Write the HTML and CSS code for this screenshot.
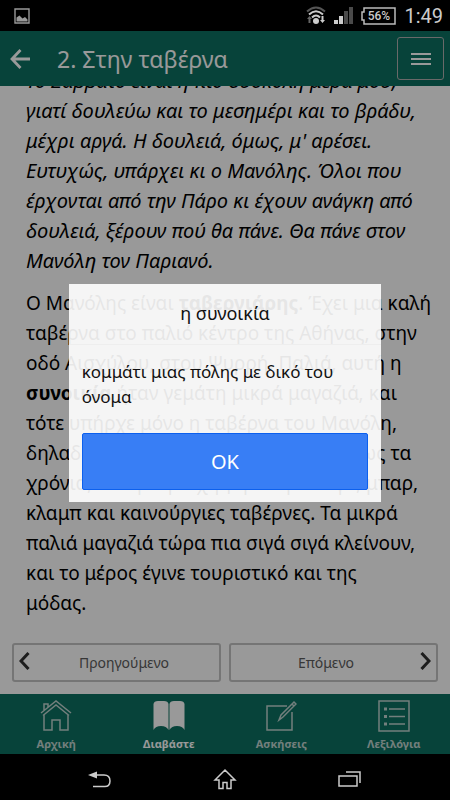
FILE: index.html
```html
<!DOCTYPE html>
<html lang="el">
<head>
<meta charset="utf-8">
<meta name="viewport" content="width=device-width, initial-scale=1">
<title>2. Στην ταβέρνα</title>
<link rel="stylesheet" href="styles.css">
</head>
<body>
<div class="phone">
  <div class="status">
    <svg class="status-photo" width="16" height="16" viewBox="0 0 16 16"><path d="M1 1h14v14H1z" fill="none" stroke="#999" stroke-width="1.4"/><path d="M2.500 13.500v-4l3-2 3 3 2.500-1.500 2.500 2.500v2z" fill="#999"/></svg>
    <svg width="20" height="19" viewBox="0 0 20 19" fill="none" stroke="#ccc" stroke-width="2"><path d="M1 5.500Q10-2.500 19 5.500" stroke="#555"/><path d="M3 8.500Q10 2 17 8.500M6 11.500Q10 7.500 14 11.500"/><circle cx="10" cy="15" r="3" fill="#ccc" stroke="none"/><path d="M1 13l2.500-3L6 13H4.500v4h-2v-4z" fill="#666" stroke="none"/><path d="M14 14l2.500 3 2.500-3h-1.500v-4h-2v4z" fill="#ccc" stroke="none"/></svg>
    <svg class="status-signal" width="19" height="17" viewBox="0 0 19 17"><path d="M0 13h4v4H0zM5 9h4v8H5z" fill="#ccc"/><path d="M10 4h4v13h-4zM15 0h4v17h-4z" fill="#4a4a4a"/></svg>
    <div class="battery"><svg width="35" height="18" viewBox="0 0 35 18" fill="none" stroke="#bbb" stroke-width="1.500"><path d="M3 1h31v16H3v-4H1V5h2z"/></svg><span>56%</span></div>
    <span class="clock">1:49</span>
  </div>
  <div class="app">
    <header class="bar">
      <button class="back" aria-label="Πίσω"><svg width="20" height="20" viewBox="0 0 20 20" fill="none" stroke="#fff" stroke-width="2.800"><path d="M20 10H2M10.500 1L2 10l8.500 9"/></svg></button>
      <h1>2. Στην ταβέρνα</h1>
      <button class="menu" aria-label="Μενού"><svg width="20" height="14" viewBox="0 0 20 14" stroke="#fff" stroke-width="2"><path d="M0 2h20M0 7h20M0 12h20"/></svg></button>
    </header>
    <main class="content">
      <article class="story">
        <p class="quote">Το Σάββατο είναι η πιο δύσκολη μέρα μου,<br>γιατί δουλεύω και το μεσημέρι και το βράδυ,<br>μέχρι αργά. Η δουλειά, όμως, μ' αρέσει.<br>Ευτυχώς, υπάρχει κι ο Μανόλης. Όλοι που<br>έρχονται από την Πάρο κι έχουν ανάγκη από<br>δουλειά, ξέρουν πού θα πάνε. Θα πάνε στον<br>Μανόλη τον Παριανό.</p>
        <p>Ο Μανόλης είναι <b>ταβερνιάρης</b>. Έχει μια καλή<br>ταβέρνα στο παλιό κέντρο της Αθήνας, στην<br>οδό Αισχύλου, στου Ψυρρή. Παλιά, αυτή η<br><b>συνοικία</b> ήταν γεμάτη μικρά μαγαζιά, και<br>τότε υπήρχε μόνο η ταβέρνα του Μανόλη,<br>δηλαδή του πατέρα του. Τώρα, όμως, ως τα<br>χρόνια, και η περιοχή γέμισε με καφέ, μπαρ,<br>κλαμπ και καινούργιες ταβέρνες. Τα μικρά<br>παλιά μαγαζιά τώρα πια σιγά σιγά κλείνουν,<br>και το μέρος έγινε τουριστικό και της<br>μόδας.</p>
      </article>
      <nav class="pager">
        <button class="prev"><svg width="11" height="18" viewBox="0 0 11 18"><path d="M9.500 1L2 9l7.500 8"/></svg>Προηγούμενο</button>
        <button class="next"><svg width="11" height="18" viewBox="0 0 11 18"><path d="M1.500 1L9 9l-7.500 8"/></svg>Επόμενο</button>
      </nav>
    </main>
    <nav class="tabs">
      <a href="#home"><svg width="32" height="32" viewBox="0 0 32 32"><path d="M1 13L16 1l15 12M3 15.500L16 5l13 10.500M4 10V4h4v3M4 15v15h8V20h8v10h8V15"/></svg>Αρχική</a>
      <a class="active" href="#read"><svg width="32" height="32" viewBox="0 0 32 32"><path d="M.5 4Q1 1 5 1h6q4 0 4.500 3v26q-2-4-7.500-4T.5 30zM16.500 4Q17 1 21 1h6q4 0 4.500 3v26q-2-4-7.500-4t-7.500 4z"/></svg>Διαβάστε</a>
      <a href="#exercises"><svg width="32" height="32" viewBox="0 0 32 32"><path d="M22 6H2v24h25V12M14 20l2-5L29 2l2 2-13 13zM27 4l2 2"/></svg>Ασκήσεις</a>
      <a href="#glossary"><svg width="32" height="32" viewBox="0 0 32 32"><path d="M1 1h30v30H1zM11 9h16M11 16.500h16M11 24h16"/><path d="M6 9h3M6 16.500h3M6 24h3" stroke-width="3"/></svg>Λεξιλόγια</a>
    </nav>
    <div class="backdrop">
      <section class="popup" role="dialog" aria-labelledby="word">
        <h2 id="word">η συνοικία</h2>
        <div class="popup-body"><p>κομμάτι μιας πόλης με δικό του<br>όνομα</p><button class="ok">OK</button></div>
      </section>
    </div>
  </div>
  <div class="keys">
    <button aria-label="Επιστροφή"><svg width="24" height="18" viewBox="0 0 24 18"><path d="M6 5h10q6 0 6 6t-6 5.500H5"/><path d="M0 5l9-3.500v7z" fill="#ccc" stroke="none"/></svg></button>
    <button aria-label="Αρχική οθόνη"><svg width="24" height="22" viewBox="0 0 24 22"><path d="M2 12L12 2l10 10h-4v8.500h-4v-6h-4v6H6V12z"/></svg></button>
    <button aria-label="Πρόσφατα"><svg width="24" height="18" viewBox="0 0 24 18"><path d="M1 6h18v10H1zM8 2h14v11"/></svg></button>
  </div>
</div>
</body>
</html>
```
FILE: styles.css
```css
* { box-sizing: border-box; }
body { margin: 0; background: #000; font-family: "Noto Sans", "Open Sans", sans-serif; }
h1, h2, p { margin: 0; font-weight: 400; }
button { font: inherit; color: inherit; margin: 0; padding: 0; border: 0; background: none; }
svg { display: block; flex: none; }

.phone { display: flex; flex-direction: column; height: 100vh; overflow: hidden; }
.status { display: flex; flex: none; align-items: center; gap: 8px; height: 31px; padding: 0 7px 0 14px; color: #ccc; font-family: Roboto, sans-serif; }
.status-photo { margin-right: auto; }
.battery { display: grid; place-items: center; }
.battery > * { grid-area: 1 / 1; }
.battery span { font-size: 12px; font-weight: 500; }
.clock { font-size: 20px; }

.app { position: relative; display: flex; flex: 1; flex-direction: column; min-height: 0; background: #fff; }
.bar { display: flex; flex: none; align-items: center; height: 55px; padding: 0 6px 0 10px; background: #0d7061; color: #fff; }
.bar h1 { flex: 1; padding-left: 27px; font-size: 23px; line-height: 32px; }
.menu { display: grid; place-items: center; width: 47px; height: 43px; border: 1px solid #b0b0b0; border-radius: 3px; }

.content { display: flex; flex: 1; flex-direction: column; justify-content: flex-end; min-height: 0; overflow: hidden; padding: 0 12px 12px; }
.story { padding: 0 14px; font-size: 19px; line-height: 30px; white-space: nowrap; }
.story p { margin-bottom: 12px; }
.story p:last-child { margin-bottom: 25px; }
.story .quote { font-size: 20px; font-style: italic; }
.pager { display: flex; gap: 8px; }
.pager button { position: relative; flex: 1; height: 39px; border: 2px solid #c4c4c4; border-radius: 3px; color: #5c5c5c; font-size: 14px; }
.pager .prev { padding-left: 15px; }
.pager .next { padding-right: 15px; }
.pager svg { position: absolute; top: 7px; fill: none; stroke: #333; stroke-width: 3; }
.prev svg { left: 5px; }
.next svg { right: 5px; }

.tabs { display: flex; flex: none; height: 60px; background: #0d7061; }
.tabs a { display: flex; flex: 1; flex-direction: column; align-items: center; gap: 2px; padding-top: 6px; color: #c0d4d0; font-size: 11px; line-height: 20px; font-weight: 700; text-decoration: none; }
.tabs svg { fill: none; stroke: currentColor; stroke-width: 1.5; }
.tabs .active { color: #fff; }
.tabs .active svg { fill: #fff; stroke: none; }

.backdrop { position: absolute; inset: 0; display: grid; place-items: center; background: rgba(0, 0, 0, .4); }
.popup { width: 69.5%; max-width: 400px; background: rgba(255, 255, 255, .9); color: #111; }
.popup h2 { height: 61px; padding-top: 15px; border-bottom: 1px solid #eee; font-size: 18px; line-height: 29px; text-align: center; }
.popup-body { padding: 14px 13px 12px; font-size: 17px; line-height: 25px; white-space: nowrap; }
.ok { display: block; width: 100%; height: 57px; margin-top: 24px; border: 1px solid #0c60ee; border-radius: 2px; background: #387ef5; color: #fff; font-size: 20px; }

.keys { display: flex; flex: none; height: 46px; justify-content: center; gap: 101px; align-items: center; padding-top: 3px; }
.keys svg { fill: none; stroke: #ccc; stroke-width: 1.5; }
```
